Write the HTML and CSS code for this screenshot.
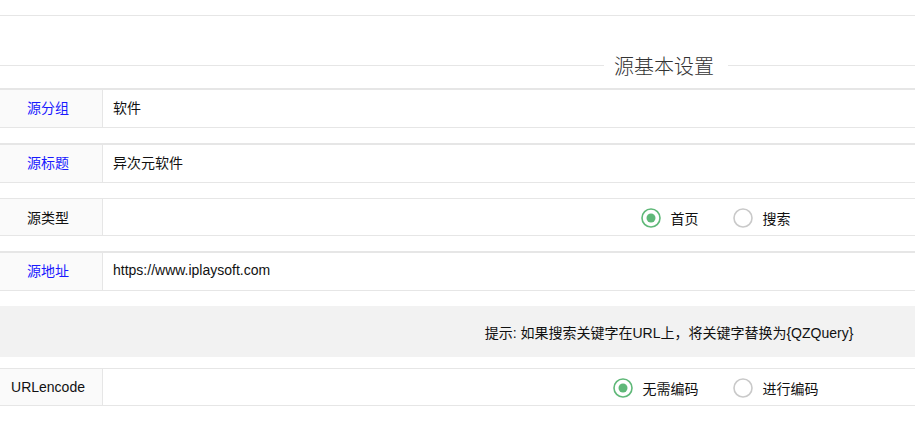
FILE: index.html
```html
<!DOCTYPE html>
<html lang="zh-CN">
<head>
<meta charset="utf-8">
<title>源基本设置</title>
<link rel="stylesheet" href="styles.css">
</head>
<body>
<div class="page">
  <div class="top-rule"></div>
  <div class="legend"><span class="legend-line"></span><span class="legend-text">源基本设置</span><span class="legend-line"></span></div>

  <div class="row row-input">
    <div class="label blue">源分组</div>
    <div class="field"><span class="value">软件</span></div>
  </div>

  <div class="row row-input">
    <div class="label blue">源标题</div>
    <div class="field"><span class="value">异次元软件</span></div>
  </div>

  <div class="row row-radio">
    <div class="label">源类型</div>
    <div class="field field-center">
      <div class="radio-group">
        <div class="radio">
          <svg class="radio-icon" viewBox="0 0 20 20"><circle cx="10" cy="10" r="9" fill="none" stroke="#5fb878" stroke-width="1.6"/><circle cx="10" cy="10" r="4.5" fill="#5fb878"/></svg>
          <span>首页</span>
        </div>
        <div class="radio">
          <svg class="radio-icon" viewBox="0 0 20 20"><circle cx="10" cy="10" r="9" fill="none" stroke="#c9c9c9" stroke-width="1.6"/></svg>
          <span>搜索</span>
        </div>
      </div>
    </div>
  </div>

  <div class="row row-input">
    <div class="label blue">源地址</div>
    <div class="field"><span class="value">https://www.iplaysoft.com</span></div>
  </div>

  <div class="tip">提示: 如果搜索关键字在URL上，将关键字替换为{QZQuery}</div>

  <div class="row row-radio row-last">
    <div class="label">URLencode</div>
    <div class="field field-center">
      <div class="radio-group">
        <div class="radio">
          <svg class="radio-icon" viewBox="0 0 20 20"><circle cx="10" cy="10" r="9" fill="none" stroke="#5fb878" stroke-width="1.6"/><circle cx="10" cy="10" r="4.5" fill="#5fb878"/></svg>
          <span>无需编码</span>
        </div>
        <div class="radio">
          <svg class="radio-icon" viewBox="0 0 20 20"><circle cx="10" cy="10" r="9" fill="none" stroke="#c9c9c9" stroke-width="1.6"/></svg>
          <span>进行编码</span>
        </div>
      </div>
    </div>
  </div>
</div>
</body>
</html>
```

FILE: styles.css
```css
html, body {
  margin: 0;
  padding: 0;
  overflow: hidden;
  background: #fff;
}

body {
  font-family: "Liberation Sans", "Noto Sans CJK SC", sans-serif;
  font-size: 14px;
  color: #111;
}

.page {
  width: 1332px;
}

.top-rule {
  margin-top: 15px;
  height: 1px;
  background: #e6e6e6;
}

.legend {
  margin-top: 35px;
  height: 29px;
  display: flex;
  align-items: center;
}

.legend-line {
  flex: 1;
  height: 1px;
  background: #e6e6e6;
}

.legend-text {
  padding: 0 10px;
  margin-right: 4px;
  font-family: "Noto Sans CJK SC", sans-serif;
  font-size: 20px;
  font-weight: 300;
  line-height: 29px;
  color: #333;
}

.row {
  display: flex;
  border-top: 1px solid #e6e6e6;
  border-bottom: 1px solid #e6e6e6;
  margin-top: 15px;
}

.legend + .row {
  margin-top: 8px;
}

.row-input {
  border-top-width: 2px;
  height: 37px;
}

.row-input .label,
.row-input .field {
  padding-bottom: 3px;
}

.row-radio {
  height: 36px;
}

.row-last {
  margin-top: 11px;
}

.label {
  width: 96px;
  padding-right: 6px;
  background: #fafafa;
  border-right: 1px solid #e6e6e6;
  display: flex;
  align-items: center;
  justify-content: center;
  color: #111;
}

.label.blue {
  color: #1a1aff;
}

.field {
  flex: 1;
  display: flex;
  align-items: center;
  padding-left: 10px;
}

.field-center {
  justify-content: center;
  padding-left: 0;
  padding-right: 4px;
}

.radio-group {
  display: flex;
  align-items: center;
  gap: 34px;
  padding-top: 2px;
}

.radio {
  display: flex;
  align-items: center;
  gap: 10px;
}

.radio-icon {
  width: 20px;
  height: 20px;
  display: block;
}

.tip {
  margin-top: 15px;
  height: 51px;
  background: #f2f2f2;
  display: flex;
  align-items: center;
  justify-content: center;
  padding-left: 6px;
  color: #111;
}
```
